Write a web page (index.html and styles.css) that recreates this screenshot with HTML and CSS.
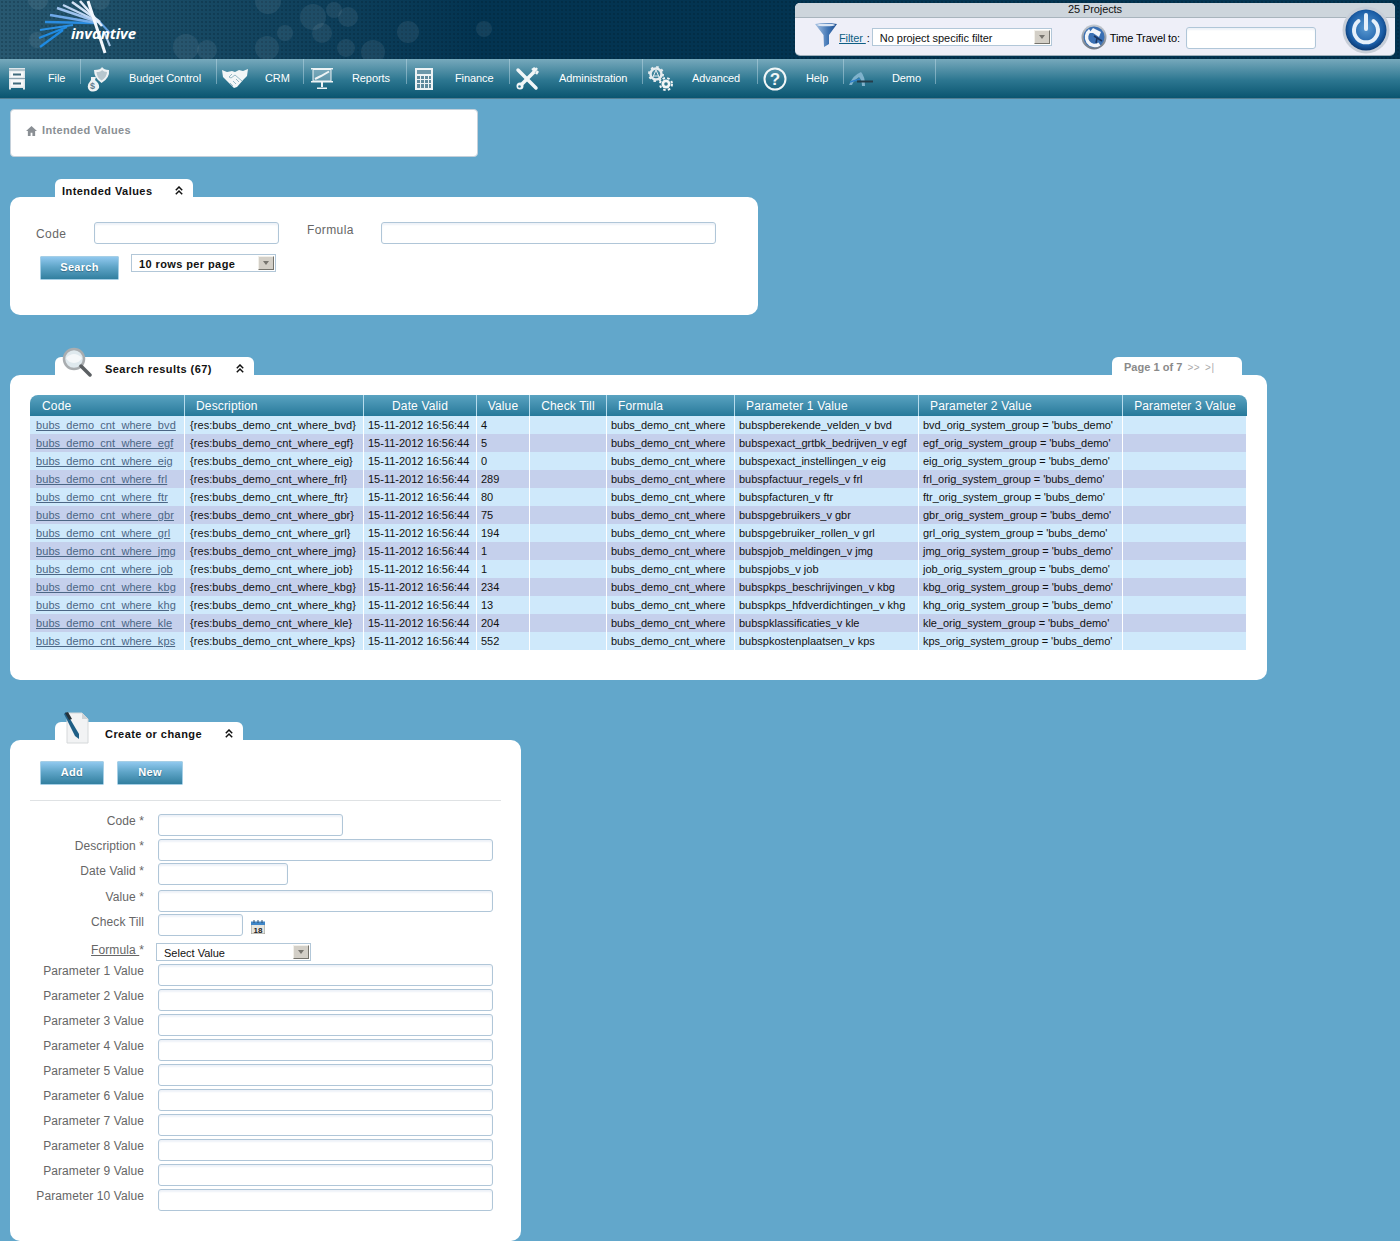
FILE: index.html
```html
<!DOCTYPE html>
<html lang="en">
<head>
<meta charset="utf-8">
<title>Intended Values</title>
<link rel="stylesheet" href="styles.css">
</head>
<body>
<header class="top">
  <svg class="bubbles" viewBox="0 0 500 59" width="500" height="59" aria-hidden="true">
    <g fill="#fff" fill-opacity=".07">
      <circle cx="313" cy="17" r="13"/><circle cx="348" cy="17" r="10"/><circle cx="334" cy="10" r="8"/><circle cx="322" cy="33" r="10"/><circle cx="408" cy="32" r="11"/><circle cx="346" cy="48" r="9"/><circle cx="373" cy="52" r="12"/><circle cx="285" cy="33" r="8"/><circle cx="267" cy="48" r="12"/><circle cx="186" cy="47" r="13"/><circle cx="207" cy="50" r="10"/><circle cx="268" cy="1" r="13"/><circle cx="100" cy="0" r="10"/><circle cx="38" cy="0" r="10"/><circle cx="37" cy="40" r="8"/><circle cx="484" cy="29" r="8"/>
    </g>
  </svg>
  <div class="logo">
    <svg class="logo-rays" viewBox="0 0 80 59" width="80" height="59" aria-hidden="true">
      <g fill="none">
        <path d="M63 19 L76 33" stroke="#5f9fe0" stroke-width="2"/>
        <path d="M70 32 L76 46" stroke="#a9c8ea" stroke-width="2"/>
        <path d="M6 47 L29 30" stroke="#1f8ae2" stroke-width="2.200"/>
        <path d="M5 38 L33 27" stroke="#1f8ae2" stroke-width="2.200"/>
        <path d="M6 30 L39 25" stroke="#2a90e4" stroke-width="2.200"/>
        <path d="M11 22 L60 23" stroke="#2a8ce0" stroke-width="2.400"/>
        <path d="M16 15 L63 23" stroke="#6fa9e8" stroke-width="2.400"/>
        <path d="M23 8 L64 22" stroke="#9dc2ee" stroke-width="2.400"/>
        <path d="M29 5 L65 22" stroke="#bcd4f2" stroke-width="2.400"/>
        <path d="M38 2 L66 22" stroke="#d4e3f6" stroke-width="2.600"/>
        <path d="M46 1 L68 26" stroke="#e6eefa" stroke-width="2.600"/>
        <path d="M54 1 L71 53" stroke="#f3f7fd" stroke-width="3"/>
      </g>
    </svg>
    <span class="logo-text">invantive</span>
  </div>
  <div class="project-box">
    <div class="project-count">25 Projects</div>
    <div class="project-row">
      <svg class="ic-funnel" viewBox="0 0 22 24" width="22" height="24" aria-hidden="true">
        <defs><linearGradient id="fg" x1="0" x2="1" y1="0" y2="0"><stop offset="0" stop-color="#a9c4e4"/><stop offset=".6" stop-color="#3f74b4"/><stop offset="1" stop-color="#1f4f8f"/></linearGradient></defs>
        <path d="M0 1 Q11 -1 22 1 L14 12 L14 21 L9 24 L8.500 12 Z" fill="url(#fg)"/>
        <ellipse cx="11" cy="2" rx="9" ry="1.300" fill="#dbe6f4"/>
      </svg>
      <a class="filter-link" href="#">Filter </a><span class="filter-colon">:</span>
      <div class="select select-filter"><span>No project specific filter</span><i class="arrow"></i></div>
      <svg class="ic-clock" viewBox="0 0 26 26" width="26" height="26" aria-hidden="true">
        <defs><linearGradient id="cg" x1="0" x2="0" y1="0" y2="1"><stop offset="0" stop-color="#c3cad2"/><stop offset="1" stop-color="#6f7883"/></linearGradient></defs>
        <circle cx="13" cy="13" r="12.500" fill="url(#cg)"/>
        <circle cx="13" cy="13" r="10.500" fill="#3a70b4"/>
        <path d="M9 6.500 A8 8 0 0 0 18.500 20" fill="none" stroke="#f2f5fa" stroke-width="3.500"/>
        <path d="M12 4 L20 8 L18 13 L12 9 L8 9Z" fill="#f2f5fa"/>
        <path d="M13 12 L21 17 M16 14 L15 19" fill="none" stroke="#1a3560" stroke-width="1.500"/>
      </svg>
      <span class="tt-label">Time Travel to:</span>
      <input class="field tt-input" type="text">
    </div>
    <svg class="ic-power" viewBox="0 0 48 48" width="48" height="48" aria-hidden="true">
      <defs><radialGradient id="pg" cx=".5" cy=".45" r=".55"><stop offset="0" stop-color="#5a9ad2"/><stop offset=".75" stop-color="#1c5fa8"/><stop offset="1" stop-color="#0b3a74"/></radialGradient></defs>
      <circle cx="24" cy="24" r="23.500" fill="#c7ced8"/>
      <circle cx="24" cy="24" r="20.500" fill="url(#pg)"/>
      <path d="M16.500 15 A12 12 0 1 0 31.500 15" fill="none" stroke="#e6f0fa" stroke-width="4" stroke-linecap="round"/>
      <path d="M24 9 L24 23" fill="none" stroke="#e6f0fa" stroke-width="4" stroke-linecap="round"/>
    </svg>
  </div>
</header>

<nav class="nav">
  <a class="nav-item n1" href="#"><span class="nav-ic"><svg viewBox="0 0 24 24" width="24" height="24"><path d="M4 1H20V22.500H18V21H6V22.500H4Z" fill="#dfe7eb"/><path d="M4 2.500H20V3.500H4ZM4 11H20V12H4Z" fill="#8aa3b0"/><path d="M5.500 4.500H18.500V10H5.500ZM5.500 13H18.500V19.500H5.500Z" fill="#f7f9fa"/><path d="M8 6.500H16V8.500H8ZM8 15.500H16V17.500H8Z" fill="#3f6a7c"/></svg></span>File</a>
  <a class="nav-item n2" href="#"><span class="nav-ic"><svg viewBox="0 0 26 26" width="26" height="26"><path d="M8 4 Q15 4 16 1 Q18 4 23 4 Q24 12 15.500 17 Q8 12 8 4Z" fill="#eef2f4"/><path d="M10.500 6 Q15 6 16 4 Q18 6 21 6 Q21 11 15.500 14.500 Q10.500 11 10.500 6Z" fill="#b6c6ce"/><path d="M5 11 H10 L9 14 Q14 18 13 22 Q10 27 4 25 Q-1 21 5 14Z" fill="#eef2f4"/><text x="4" y="23" font-size="9" font-family="Liberation Sans" font-weight="700" fill="#5f7d8c">$</text></svg></span>Budget Control</a>
  <a class="nav-item n3" href="#"><span class="nav-ic"><svg viewBox="0 0 26 19" width="26" height="19"><path d="M0 1 L5 3 L10 2 L13 3 L17 1 L21 2 L26 0 L25 7 L22 10 L15 18 L12 19 L9 16 L3 10 L1 8Z" fill="#f3f6f7"/><path d="M10 5 L7 8 L9 9 L13 6 L20 12 M8 14 L11 17 M11 12 L14 15 M14 10 L17 13" stroke="#7fa9ba" stroke-width=".8" fill="none"/></svg></span>CRM</a>
  <a class="nav-item n4" href="#"><span class="nav-ic ic-shift"><svg viewBox="0 0 22 24" width="22" height="24"><path d="M0 1H22V2.500H0ZM0 14H22V15.500H0ZM10 15.500H12V20H10ZM6 20.500H16V22H6Z" fill="#eef3f5"/><path d="M2 2.500H20V14H2Z" fill="#f6f9fa" fill-opacity=".25"/><path d="M4 12 L10 9 L18 4.500" stroke="#eef3f5" stroke-width="2" fill="none"/><path d="M2 2.500H20V14H2Z" stroke="#eef3f5" fill="none"/></svg></span>Reports</a>
  <a class="nav-item n5" href="#"><span class="nav-ic ic-shift"><svg viewBox="0 0 20 22" width="20" height="22"><path d="M1 0H19V22H1Z" fill="#eef3f5"/><path d="M3 2H17V6H3Z" fill="#6c97a9"/><path d="M3 8H6V11H3ZM7 8H10V11H7ZM11 8H14V11H11ZM15 8H17V11H15ZM3 12H6V15H3ZM7 12H10V15H7ZM11 12H14V15H11ZM15 12H17V15H15ZM3 16H6V20H3ZM7 16H10V20H7ZM11 16H14V20H11ZM15 16H17V20H15Z" fill="#5f8a9d"/></svg></span>Finance</a>
  <a class="nav-item n6" href="#"><span class="nav-ic"><svg viewBox="0 0 24 24" width="24" height="24"><path d="M3 3 L21 21" stroke="#f2f6f7" stroke-width="3.500" stroke-linecap="round"/><path d="M19 5 L6 18" stroke="#f2f6f7" stroke-width="3.500"/><path d="M22 1 L18 6 M21 7 L23 4 M17 3 L20 1" stroke="#f2f6f7" stroke-width="2.500"/><circle cx="5" cy="19" r="3.500" fill="#f2f6f7"/><circle cx="4.500" cy="19.500" r="1.300" fill="#2c7690"/></svg></span>Administration</a>
  <a class="nav-item n7" href="#"><span class="nav-ic"><svg viewBox="0 0 25 25" width="25" height="25"><circle cx="8" cy="8" r="5.500" fill="none" stroke="#e6ecef" stroke-width="2.500"/><circle cx="8" cy="8" r="7" fill="none" stroke="#e6ecef" stroke-width="2" stroke-dasharray="2.500 3"/><path d="M8 4 L5 11 M8 4 L11 11 M5 10 H11" stroke="#e6ecef"/><circle cx="18" cy="18" r="4.500" fill="#f2f5f6"/><circle cx="18" cy="18" r="6" fill="none" stroke="#f2f5f6" stroke-width="2" stroke-dasharray="2.500 2.300"/><circle cx="18" cy="18" r="1.800" fill="#33798f"/></svg></span>Advanced</a>
  <a class="nav-item n8" href="#"><span class="nav-ic"><svg viewBox="0 0 24 24" width="24" height="24"><circle cx="12" cy="12" r="10.500" fill="none" stroke="#f2f6f7" stroke-width="2"/><text x="12" y="18" text-anchor="middle" font-size="17" font-family="Liberation Sans" font-weight="700" fill="#f2f6f7">?</text></svg></span>Help</a>
  <a class="nav-item n9" href="#"><span class="nav-ic"><svg viewBox="0 0 24 14" width="24" height="14"><path d="M0 13 Q4 3 12 0 Q16 4 16 14 L13 14 Q13 8 10 5 Q5 8 3 13Z" fill="#7fb2cc"/><path d="M1 10 L11 7" stroke="#2f80c8" stroke-width="1.500"/><path d="M8 8.500H24V10.500H8Z" fill="#243d4a"/></svg></span>Demo</a>
</nav>

<main class="main">
  <div class="crumb">
    <svg class="ic-home" viewBox="0 0 12 11" width="11" height="10" aria-hidden="true"><path d="M6 0 L12 5.500 L10 5.500 L10 11 L7 11 L7 7.500 L5 7.500 L5 11 L2 11 L2 5.500 L0 5.500Z" fill="#8a8f94"/></svg>
    <span>Intended Values</span>
  </div>

  <section class="section sec-search">
    <div class="tabs">
      <div class="tab tab-a"><span class="tab-title">Intended Values</span><svg class="chev" viewBox="0 0 8 9" width="8" height="9" aria-hidden="true"><path d="M.8 4.200 L4 1 L7.200 4.200 M.8 8.200 L4 5 L7.200 8.200" fill="none" stroke="#111" stroke-width="1.500"/></svg></div>
    </div>
    <div class="panel panel-search">
      <div class="search-row">
        <label class="lbl-code">Code</label>
        <input class="field w-185" type="text">
        <label class="lbl-formula">Formula</label>
        <input class="field w-335" type="text">
      </div>
      <div class="search-row2">
        <button class="btn btn-search" type="button">Search</button>
        <div class="select select-rows"><span>10 rows per page</span><i class="arrow"></i></div>
      </div>
    </div>
  </section>

  <section class="section sec-results">
    <div class="tabs">
      <div class="tab tab-b">
        <svg class="tab-ic ic-glass" viewBox="0 0 30 32" width="30" height="32" aria-hidden="true">
          <circle cx="12" cy="12" r="10" fill="#dfe9ee" stroke="#a9adb0" stroke-width="2.500"/>
          <path d="M4 11 Q12 3 20 11 A9 9 0 0 1 4 11Z" fill="#f5f8fa"/>
          <path d="M19 19 L28 28" stroke="#5b5f62" stroke-width="3.500" stroke-linecap="round"/>
        </svg>
        <span class="tab-title">Search results (67)</span><svg class="chev" viewBox="0 0 8 9" width="8" height="9" aria-hidden="true"><path d="M.8 4.200 L4 1 L7.200 4.200 M.8 8.200 L4 5 L7.200 8.200" fill="none" stroke="#111" stroke-width="1.500"/></svg>
      </div>
      <div class="tab tab-page"><b>Page 1 of 7</b><span class="pg">&gt;&gt;</span><span class="pg">&gt;|</span></div>
    </div>
    <div class="panel panel-results">
      <table class="grid">
        <colgroup><col class="c1"><col class="c2"><col class="c3"><col class="c4"><col class="c5"><col class="c6"><col class="c7"><col class="c8"><col class="c9"></colgroup>
        <thead>
          <tr><th>Code</th><th>Description</th><th class="ctr">Date Valid</th><th class="ctr">Value</th><th class="ctr">Check Till</th><th>Formula</th><th>Parameter 1 Value</th><th>Parameter 2 Value</th><th class="ctr">Parameter 3 Value</th></tr>
        </thead>
        <tbody>
          <tr><td class="code"><a href="#">bubs_demo_cnt_where_bvd</a></td><td class="desc">{res:bubs_demo_cnt_where_bvd}</td><td>15-11-2012 16:56:44</td><td>4</td><td></td><td>bubs_demo_cnt_where</td><td>bubspberekende_velden_v bvd</td><td class="p2">bvd_orig_system_group = 'bubs_demo'</td><td></td></tr>
          <tr><td class="code"><a href="#">bubs_demo_cnt_where_egf</a></td><td class="desc">{res:bubs_demo_cnt_where_egf}</td><td>15-11-2012 16:56:44</td><td>5</td><td></td><td>bubs_demo_cnt_where</td><td>bubspexact_grtbk_bedrijven_v egf</td><td class="p2">egf_orig_system_group = 'bubs_demo'</td><td></td></tr>
          <tr><td class="code"><a href="#">bubs_demo_cnt_where_eig</a></td><td class="desc">{res:bubs_demo_cnt_where_eig}</td><td>15-11-2012 16:56:44</td><td>0</td><td></td><td>bubs_demo_cnt_where</td><td>bubspexact_instellingen_v eig</td><td class="p2">eig_orig_system_group = 'bubs_demo'</td><td></td></tr>
          <tr><td class="code"><a href="#">bubs_demo_cnt_where_frl</a></td><td class="desc">{res:bubs_demo_cnt_where_frl}</td><td>15-11-2012 16:56:44</td><td>289</td><td></td><td>bubs_demo_cnt_where</td><td>bubspfactuur_regels_v frl</td><td class="p2">frl_orig_system_group = 'bubs_demo'</td><td></td></tr>
          <tr><td class="code"><a href="#">bubs_demo_cnt_where_ftr</a></td><td class="desc">{res:bubs_demo_cnt_where_ftr}</td><td>15-11-2012 16:56:44</td><td>80</td><td></td><td>bubs_demo_cnt_where</td><td>bubspfacturen_v ftr</td><td class="p2">ftr_orig_system_group = 'bubs_demo'</td><td></td></tr>
          <tr><td class="code"><a href="#">bubs_demo_cnt_where_gbr</a></td><td class="desc">{res:bubs_demo_cnt_where_gbr}</td><td>15-11-2012 16:56:44</td><td>75</td><td></td><td>bubs_demo_cnt_where</td><td>bubspgebruikers_v gbr</td><td class="p2">gbr_orig_system_group = 'bubs_demo'</td><td></td></tr>
          <tr><td class="code"><a href="#">bubs_demo_cnt_where_grl</a></td><td class="desc">{res:bubs_demo_cnt_where_grl}</td><td>15-11-2012 16:56:44</td><td>194</td><td></td><td>bubs_demo_cnt_where</td><td>bubspgebruiker_rollen_v grl</td><td class="p2">grl_orig_system_group = 'bubs_demo'</td><td></td></tr>
          <tr><td class="code"><a href="#">bubs_demo_cnt_where_jmg</a></td><td class="desc">{res:bubs_demo_cnt_where_jmg}</td><td>15-11-2012 16:56:44</td><td>1</td><td></td><td>bubs_demo_cnt_where</td><td>bubspjob_meldingen_v jmg</td><td class="p2">jmg_orig_system_group = 'bubs_demo'</td><td></td></tr>
          <tr><td class="code"><a href="#">bubs_demo_cnt_where_job</a></td><td class="desc">{res:bubs_demo_cnt_where_job}</td><td>15-11-2012 16:56:44</td><td>1</td><td></td><td>bubs_demo_cnt_where</td><td>bubspjobs_v job</td><td class="p2">job_orig_system_group = 'bubs_demo'</td><td></td></tr>
          <tr><td class="code"><a href="#">bubs_demo_cnt_where_kbg</a></td><td class="desc">{res:bubs_demo_cnt_where_kbg}</td><td>15-11-2012 16:56:44</td><td>234</td><td></td><td>bubs_demo_cnt_where</td><td>bubspkps_beschrijvingen_v kbg</td><td class="p2">kbg_orig_system_group = 'bubs_demo'</td><td></td></tr>
          <tr><td class="code"><a href="#">bubs_demo_cnt_where_khg</a></td><td class="desc">{res:bubs_demo_cnt_where_khg}</td><td>15-11-2012 16:56:44</td><td>13</td><td></td><td>bubs_demo_cnt_where</td><td>bubspkps_hfdverdichtingen_v khg</td><td class="p2">khg_orig_system_group = 'bubs_demo'</td><td></td></tr>
          <tr><td class="code"><a href="#">bubs_demo_cnt_where_kle</a></td><td class="desc">{res:bubs_demo_cnt_where_kle}</td><td>15-11-2012 16:56:44</td><td>204</td><td></td><td>bubs_demo_cnt_where</td><td>bubspklassificaties_v kle</td><td class="p2">kle_orig_system_group = 'bubs_demo'</td><td></td></tr>
          <tr><td class="code"><a href="#">bubs_demo_cnt_where_kps</a></td><td class="desc">{res:bubs_demo_cnt_where_kps}</td><td>15-11-2012 16:56:44</td><td>552</td><td></td><td>bubs_demo_cnt_where</td><td>bubspkostenplaatsen_v kps</td><td class="p2">kps_orig_system_group = 'bubs_demo'</td><td></td></tr>
        </tbody>
      </table>
    </div>
  </section>

  <section class="section sec-edit">
    <div class="tabs">
      <div class="tab tab-c">
        <svg class="tab-ic ic-doc" viewBox="0 0 26 32" width="26" height="32" aria-hidden="true">
          <path d="M3 1H18L24 7V31H3Z" fill="#f2f3f4" stroke="#d5d8da"/>
          <path d="M18 1V7H24Z" fill="#cfd3d6"/>
          <path d="M0 2 L2 0 L15 22 L15 27 L11 24Z" fill="#1f5f86"/>
          <path d="M1 1 L4 0 L8 7 L5 8Z" fill="#26333b"/>
        </svg>
        <span class="tab-title">Create or change</span><svg class="chev" viewBox="0 0 8 9" width="8" height="9" aria-hidden="true"><path d="M.8 4.200 L4 1 L7.200 4.200 M.8 8.200 L4 5 L7.200 8.200" fill="none" stroke="#111" stroke-width="1.500"/></svg>
      </div>
    </div>
    <div class="panel panel-edit">
      <div class="btn-row">
        <button class="btn btn-add" type="button">Add</button>
        <button class="btn btn-new" type="button">New</button>
      </div>
      <hr class="rule">
      <div class="form">
        <div class="row"><label>Code *</label><input class="field w-185" type="text"></div>
        <div class="row"><label>Description *</label><input class="field w-335" type="text"></div>
        <div class="row r-tight"><label>Date Valid *</label><input class="field w-130" type="text"></div>
        <div class="row r-loose"><label>Value *</label><input class="field w-335" type="text"></div>
        <div class="row r-tight"><label>Check Till</label><input class="field w-85" type="text">
          <svg class="ic-cal" viewBox="0 0 14 14" width="14" height="14" aria-hidden="true"><path d="M0 3H14V14H0Z" fill="#e6e6e0" stroke="#9a9a92"/><path d="M0 1.500H14V5H0Z" fill="#3f86c8"/><path d="M3 0V3M7 0V3M11 0V3" stroke="#2c4f70"/><text x="7" y="12.500" text-anchor="middle" font-size="8" font-weight="700" font-family="Liberation Sans" fill="#222">18</text></svg>
        </div>
        <div class="row r-formula"><label><u>Formula </u>*</label><div class="select select-formula"><span>Select Value</span><i class="arrow"></i></div></div>
        <div class="row"><label>Parameter 1 Value</label><input class="field w-335" type="text"></div>
        <div class="row"><label>Parameter 2 Value</label><input class="field w-335" type="text"></div>
        <div class="row"><label>Parameter 3 Value</label><input class="field w-335" type="text"></div>
        <div class="row"><label>Parameter 4 Value</label><input class="field w-335" type="text"></div>
        <div class="row"><label>Parameter 5 Value</label><input class="field w-335" type="text"></div>
        <div class="row"><label>Parameter 6 Value</label><input class="field w-335" type="text"></div>
        <div class="row"><label>Parameter 7 Value</label><input class="field w-335" type="text"></div>
        <div class="row"><label>Parameter 8 Value</label><input class="field w-335" type="text"></div>
        <div class="row"><label>Parameter 9 Value</label><input class="field w-335" type="text"></div>
        <div class="row"><label>Parameter 10 Value</label><input class="field w-335" type="text"></div>
      </div>
    </div>
  </section>
</main>
</body>
</html>
```
FILE: styles.css
```css
* { box-sizing: border-box; }
html, body { margin: 0; padding: 0; }
body {
  background: #62a7cb;
  font-family: "Liberation Sans", Arial, sans-serif;
  font-size: 11px;
  color: #000;
  height: 1241px;
  overflow: hidden;
}
a { color: inherit; }

/* header */
.top {
  position: relative;
  height: 59px;
  display: flex;
  justify-content: space-between;
  align-items: flex-start;
  background-color: #033451;
  background-image:
    radial-gradient(rgba(0, 20, 35, .22) 1px, transparent 1px),
    linear-gradient(90deg, #285870 0, #1a4c66 150px, #033451 480px);
  background-size: 4px 4px, 100% 100%;
}
.bubbles { position: absolute; left: 0; top: 0; }
.logo { position: relative; width: 300px; height: 59px; }
.logo-rays { position: absolute; left: 34px; top: 0; }
.logo-text {
  position: absolute;
  left: 71px;
  top: 24px;
  font: italic 700 15px/18px "Open Sans", sans-serif;
  color: #fff;
  letter-spacing: -.1px;
}
.project-box {
  position: relative;
  width: 600px;
  height: 52px;
  margin: 3px 5px 0 0;
  background: #eeeff8;
  border-radius: 5px;
  box-shadow: 0 1px 0 #9fb0bb;
}
.project-count {
  height: 15px;
  background: #cdd5dc;
  border-bottom: 1px solid #a8b4bd;
  border-radius: 5px 5px 0 0;
  text-align: center;
  line-height: 13px;
  color: #111;
  letter-spacing: -.1px;
}
.project-row {
  display: flex;
  align-items: flex-start;
  padding: 5px 0 0 20px;
  height: 37px;
}
.ic-funnel { flex: none; }
.filter-link { color: #0f5f85; margin: 9px 0 0 2px; line-height: 13px; white-space: pre; letter-spacing: -.1px; }
.filter-colon { margin: 9px 0 0 1px; line-height: 13px; width: 6px; }
.select {
  display: flex;
  align-items: center;
  justify-content: space-between;
  height: 18px;
  background: #fff;
  border: 1px solid #b2c7d8;
  padding: 0 1px 0 7px;
  color: #111;
}
.select > span { padding-top: 1px; }
.select-filter { width: 180px; margin: 5px 0 0 -1px; }
.select-filter > span { letter-spacing: -.04px; }
.arrow {
  display: block;
  position: relative;
  width: 16px;
  height: 14px;
  background: #d3cfc7;
  border: 1px solid;
  border-color: #f2f0ea #75736c #75736c #f2f0ea;
}
.arrow::after {
  content: "";
  position: absolute;
  left: 4px;
  top: 4px;
  border: 3.5px solid transparent;
  border-top: 4px solid #77756f;
  border-bottom: 0;
}
.ic-clock { flex: none; margin: 1px 0 0 29px; }
.tt-label { margin: 9px 0 0 3px; line-height: 13px; width: 76px; flex: none; letter-spacing: -.15px; }
.field {
  display: block;
  height: 22px;
  border: 1px solid #b0c6d8;
  border-radius: 3px;
  background: #fff;
  box-shadow: inset 0 2px 2px #eef2f8;
  padding: 0 4px;
  margin: 0;
  outline: none;
  flex: none;
}
.tt-input { width: 130px; margin-top: 4px; }
.ic-power { position: absolute; right: 5px; top: 3px; }

/* navigation */
.nav {
  display: flex;
  height: 40px;
  background: linear-gradient(#77a9bc, #2c7690 55%, #0a5570);
  border-bottom: 1px solid #537f93;
}
.nav-item {
  display: flex;
  align-items: center;
  flex: none;
  height: 37px;
  color: #fff;
  text-decoration: none;
  white-space: nowrap;
  font-size: 11px;
  position: relative;
  letter-spacing: -.1px;
}
.n1 { width: 81px; } .n2 { width: 136px; } .n3 { width: 87px; } .n4 { width: 103px; } .n5 { width: 103px; }
.n6 { width: 133px; } .n7 { width: 115px; } .n8 { width: 86px; } .n9 { width: 92px; }
.nav-item::after {
  content: "";
  position: absolute;
  right: 0;
  top: 0;
  height: 25px;
  width: 1px;
  background: rgba(200, 225, 235, .45);
}
.nav-ic { width: 48px; flex: none; display: flex; align-items: center; padding-left: 5px; margin-top: 2px; }
.ic-shift { padding-left: 7px; }
.n6 .nav-ic, .n7 .nav-ic { width: 49px; }

/* main */
.main { padding: 10px 0 0 10px; }
.crumb {
  width: 468px;
  height: 48px;
  background: #fff;
  border: 1px solid #c4d0da;
  border-radius: 4px;
  padding: 14px 0 0 15px;
  display: flex;
  align-items: flex-start;
  gap: 5px;
  color: #8a8f94;
  font-weight: 700;
  font-size: 11px;
  line-height: 13px;
  letter-spacing: .35px;
}
.ic-home { margin-top: 2px; flex: none; }
.sec-search { margin-top: 22px; width: 748px; }
.sec-results { margin-top: 42px; width: 1257px; }
.sec-edit { margin-top: 42px; width: 511px; }
.tabs { display: flex; justify-content: space-between; padding: 0 25px 0 45px; }
.tab {
  position: relative;
  display: flex;
  align-items: center;
  height: 18px;
  background: #fff;
  border-radius: 6px 6px 0 0;
  font-weight: 700;
  font-size: 11px;
  color: #111;
}
.tab-title { white-space: nowrap; letter-spacing: .45px; padding-top: 5px; }
.chev { position: absolute; top: 7px; }
.tab-a { width: 138px; padding-left: 7px; }
.tab-a .chev { left: 120px; }
.tab-b { width: 199px; padding-left: 50px; }
.tab-b .chev { left: 181px; }
.tab-c { width: 188px; padding-left: 50px; }
.tab-c .chev { left: 170px; }
.tab-ic { position: absolute; }
.ic-glass { left: 7px; top: -10px; }
.ic-doc { left: 9px; top: -10px; }
.tab-page {
  width: 130px;
  padding-left: 12px;
  color: #8a8a8a;
  gap: 5px;
  padding-top: 2px;
}
.tab-page b { letter-spacing: .03px; }
.pg { font-weight: 400; color: #aaa; font-size: 10px; letter-spacing: .5px; }

.panel { background: #fff; border-radius: 10px; }
.panel-search { padding: 25px 0 36px 26px; height: 118px; }
.search-row { display: flex; align-items: flex-start; }
.search-row label { color: #666; font-size: 12px; letter-spacing: .4px; line-height: 14px; }
.lbl-code { width: 58px; margin-top: 5px; }
.lbl-formula { width: 74px; margin: 1px 0 0 28px; }
.w-185 { width: 185px; }
.w-335 { width: 335px; }
.w-130 { width: 130px; }
.w-85 { width: 85px; }
.search-row2 { display: flex; align-items: flex-start; margin: 10px 0 0 4px; }
.btn {
  display: block;
  height: 24px;
  border: 1px solid #a6cfe6;
  border-radius: 1px;
  background: linear-gradient(#90c8ee, #5fa5c8 45%, #327f9f);
  color: #fff;
  font: 700 11px "Liberation Sans", Arial, sans-serif;
  letter-spacing: .3px;
  text-shadow: 0 1px 1px #356a85;
  padding: 0 0 2px;
}
.btn-search { width: 79px; margin-top: 2px; }
.select-rows { width: 145px; margin-left: 12px; font-weight: 700; letter-spacing: .4px; }

/* table */
.panel-results { padding: 20px 20px 30px; height: 305px; }
.grid { width: 1217px; border-collapse: separate; border-spacing: 0; table-layout: fixed; }
.c1 { width: 155px; } .c2 { width: 179px; } .c3 { width: 113px; } .c4 { width: 53px; } .c5 { width: 77px; }
.c6 { width: 128px; } .c7 { width: 184px; } .c8 { width: 204px; } .c9 { width: 124px; }
.grid th {
  height: 21px;
  padding: 0 0 0 11px;
  text-align: left;
  font-weight: 400;
  font-size: 12px;
  letter-spacing: .15px;
  color: #fff;
  background: linear-gradient(#5aa3c1, #27799a);
  border-right: 1px solid #b6dcec;
  white-space: nowrap;
}
.grid th:first-child { padding-left: 12px; }
.grid th.ctr { text-align: center; padding: 0; }
.grid th:first-child { border-radius: 8px 0 0 0; }
.grid th:last-child { border-radius: 0 8px 0 0; border-right: 0; }
.grid td {
  height: 18px;
  padding: 0 0 0 4px;
  border-right: 1px solid #fff;
  background: #cfe9fb;
  font-size: 11px;
  color: #111;
  white-space: nowrap;
  overflow: hidden;
}
.grid tr:nth-child(even) td { background: #c5d0ec; }
.grid td.code { padding-left: 6px; color: #4b6685; font-size: 11px; letter-spacing: .07px; }
.grid td.desc { padding-left: 5px; letter-spacing: .07px; }
.grid td.p2 { letter-spacing: -.05px; }

/* edit form */
.panel-edit { padding: 21px 20px 0; height: 501px; }
.btn-row { display: flex; gap: 13px; padding-left: 10px; }
.btn-add { width: 64px; }
.btn-new { width: 66px; }
.rule { border: 0; border-top: 1px solid #dfe2e4; margin: 15px 0 13px; }
.form { display: flex; flex-direction: column; }
.row { display: flex; align-items: flex-start; margin-bottom: 3px; }
.row label {
  width: 114px;
  margin-right: 14px;
  text-align: right;
  font-size: 12px;
  letter-spacing: .1px;
  line-height: 15px;
  color: #666;
  flex: none;
  white-space: nowrap;
}
.r-tight { margin-top: -1px; }
.r-tight label { padding-top: 1px; }
.r-loose { margin-top: 2px; }
.r-formula { margin-top: 4px; }
.select-formula { width: 155px; margin: 0 0 0 -2px; font-size: 11px; }
.ic-cal { margin: 6px 0 0 8px; flex: none; }
```
